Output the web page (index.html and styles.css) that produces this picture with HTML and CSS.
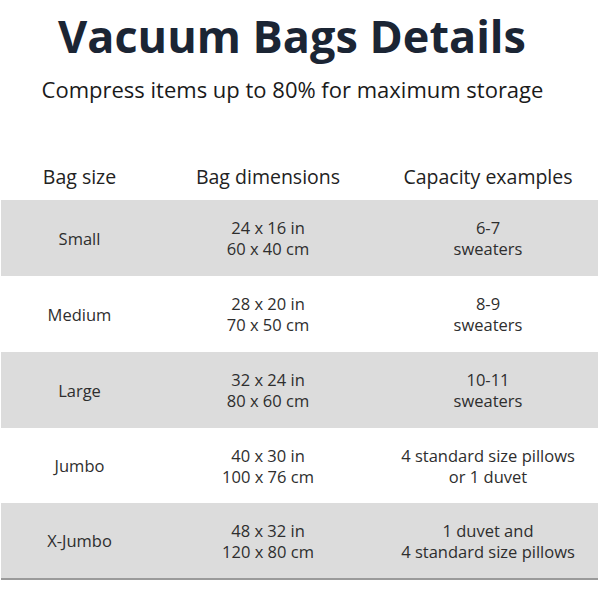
FILE: index.html
```html
<!DOCTYPE html>
<html>
<head>
<meta charset="utf-8">
<link rel="stylesheet" href="styles.css">
</head>
<body>
<div class="page">
  <h1 class="title">Vacuum Bags Details</h1>
  <p class="subtitle">Compress items up to 80% for maximum storage</p>
  <div class="table">
    <div class="row head">
      <div class="cell">Bag size</div>
      <div class="cell">Bag dimensions</div>
      <div class="cell">Capacity examples</div>
    </div>
    <div class="row shade">
      <div class="cell">Small</div>
      <div class="cell">24 x 16 in<br>60 x 40 cm</div>
      <div class="cell">6-7<br>sweaters</div>
    </div>
    <div class="row">
      <div class="cell">Medium</div>
      <div class="cell">28 x 20 in<br>70 x 50 cm</div>
      <div class="cell">8-9<br>sweaters</div>
    </div>
    <div class="row shade">
      <div class="cell">Large</div>
      <div class="cell">32 x 24 in<br>80 x 60 cm</div>
      <div class="cell">10-11<br>sweaters</div>
    </div>
    <div class="row short">
      <div class="cell">Jumbo</div>
      <div class="cell">40 x 30 in<br>100 x 76 cm</div>
      <div class="cell">4 standard size pillows<br>or 1 duvet</div>
    </div>
    <div class="row shade last">
      <div class="cell">X-Jumbo</div>
      <div class="cell">48 x 32 in<br>120 x 80 cm</div>
      <div class="cell">1 duvet and<br>4 standard size pillows</div>
    </div>
  </div>
</div>
</body>
</html>
```
FILE: styles.css
```css
html, body {
  margin: 0;
  padding: 0;
  background: #ffffff;
}
.page {
  width: 600px;
  height: 600px;
  font-family: "Open Sans", "Liberation Sans", sans-serif;
  color: #222;
}
.title {
  margin: 0;
  padding: 10px 16px 0 0;
  text-align: center;
  font-size: 45px;
  line-height: 52px;
  font-weight: 700;
  color: #1b2534;
}
.subtitle {
  margin: 0;
  padding: 13px 15px 0 0;
  text-align: center;
  font-size: 22px;
  line-height: 28px;
  color: #1a1a1a;
}
.table {
  margin-top: 61px;
  padding: 0 2px 0 1px;
}
.row {
  display: grid;
  grid-template-columns: 157px 220px 220px;
  height: 76px;
  box-sizing: border-box;
  align-items: center;
}
.row.head {
  height: 36px;
  align-items: start;
}
.head .cell {
  font-size: 19.5px;
  line-height: 26px;
  color: #222;
}
.cell {
  text-align: center;
  font-size: 16.5px;
  line-height: 21px;
  color: #2e2e2e;
}
.shade {
  background: #dcdcdc;
}
.short {
  height: 75px;
}
.last {
  height: 77px;
  border-bottom: 2px solid #9a9a9a;
}
```
